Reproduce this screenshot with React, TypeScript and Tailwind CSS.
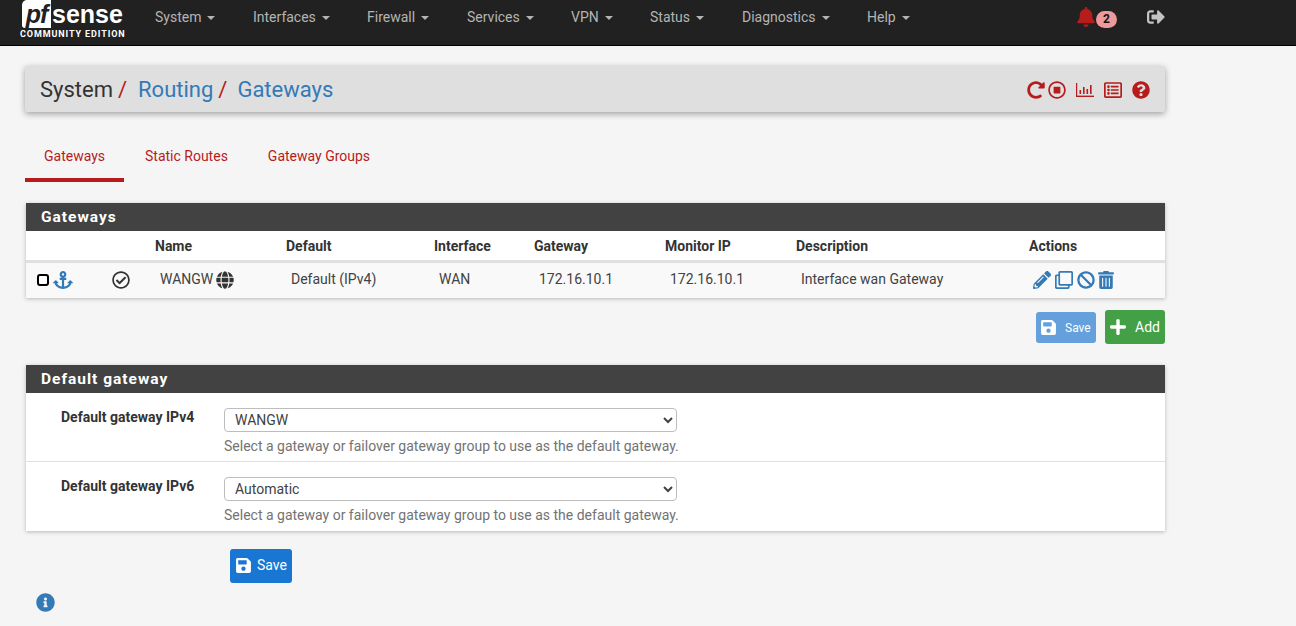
import React from 'react';
import {
  FaAnchor,
  FaBan,
  FaBell,
  FaGlobe,
  FaInfoCircle,
  FaPencilAlt,
  FaPlus,
  FaQuestionCircle,
  FaRedoAlt,
  FaRegCheckCircle,
  FaRegClone,
  FaRegListAlt,
  FaRegStopCircle,
  FaSave,
  FaSignOutAlt,
  FaTrashAlt,
} from 'react-icons/fa';

const navItems = [
  { label: 'System', width: 'w-[98px]' },
  { label: 'Interfaces', width: 'w-[114px]' },
  { label: 'Firewall', width: 'w-[100px]' },
  { label: 'Services', width: 'w-[104px]' },
  { label: 'VPN', width: 'w-[79px]' },
  { label: 'Status', width: 'w-[92px]' },
  { label: 'Diagnostics', width: 'w-[125px]' },
  { label: 'Help', width: 'w-[60px]' },
];

const Logo = () => (
  <div className="ml-[20px] w-[108px] h-[45px] flex flex-col shrink-0">
    <div className="flex items-start h-[29px]">
      <span className="ml-[2px] w-[29px] h-[28px] bg-white rounded-bl-[3px] rounded-tl-[5px] text-[#212121] italic font-bold text-[25px] leading-[28px] tracking-[-1px] text-center font-['Liberation_Sans',sans-serif]">
        pf
      </span>
      <span className="mt-[2px] text-white font-bold text-[25px] leading-[25px] ml-[1px] font-['Liberation_Sans',sans-serif]">sense</span>
    </div>
    <span className="mt-[1px] text-white font-bold text-[9px] leading-[9px] tracking-[0.9px] whitespace-nowrap">COMMUNITY EDITION</span>
  </div>
);

const Navbar = () => (
  <nav className="h-[46px] bg-[#212121] border-b border-black flex items-start shrink-0">
    <Logo />
    <ul className="flex ml-[27px] pt-[9px]">
      {navItems.map((item) => (
        <li key={item.label} className={`${item.width} flex items-center h-[17px] text-[14px] text-[#b4b4b4]`}>
          {item.label}
          <span className="ml-[6px] border-x-[4px] border-x-transparent border-t-[4px] border-t-[#b4b4b4]" />
        </li>
      ))}
    </ul>
    <div className="absolute left-[1077px] top-[7px] flex items-start">
      <FaBell className="text-[#b71c1c] w-[18px] h-[20px]" />
      <span className="ml-[1px] mt-[4px] w-[21px] h-[17px] rounded-full bg-[#ef9a9a] text-[#111] text-[12px] font-bold leading-[17px] text-center">2</span>
    </div>
    <FaSignOutAlt className="absolute left-[1147px] top-[8px] w-[18px] h-[18px] text-[#c4c4c4]" />
  </nav>
);

const BarChartIcon = () => (
  <svg viewBox="0 0 18 16" className="w-[18px] h-[16px] text-[#b71c1c]" fill="currentColor">
    <rect x="0" y="1" width="1.2" height="14" />
    <rect x="0" y="13.6" width="18" height="1.4" />
    <rect x="3.5" y="8" width="1.6" height="4" />
    <rect x="7" y="5" width="1.6" height="7" />
    <rect x="10.5" y="7" width="1.6" height="5" />
    <rect x="14" y="3" width="1.6" height="9" />
  </svg>
);

const Breadcrumb = () => (
  <div className="h-[46px] bg-[#dfdfdf] rounded-[2px] shadow-[0_2px_6px_rgba(0,0,0,0.35)] flex items-center pl-[15px] pr-[15px] text-[22px]">
    <span className="text-[#333]">System</span>
    <span className="text-[#b71c1c] ml-[5px]">/</span>
    <span className="text-[#337ab7] ml-[11px]">Routing</span>
    <span className="text-[#b71c1c] ml-[5px]">/</span>
    <span className="text-[#337ab7] ml-[10px]">Gateways</span>
    <div className="ml-auto flex items-center text-[#b71c1c] pt-[2px]">
      <FaRedoAlt className="w-[18px] h-[18px]" />
      <FaRegStopCircle className="ml-[3px] w-[18px] h-[18px]" />
      <span className="ml-[10px]"><BarChartIcon /></span>
      <FaRegListAlt className="ml-[10px] w-[18px] h-[18px]" />
      <FaQuestionCircle className="ml-[10px] w-[18px] h-[18px]" />
    </div>
  </div>
);

const Tabs = () => (
  <div className="flex mt-[20px] h-[50px] text-[14px] text-[#b71c1c]">
    <div className="w-[99px] border-b-[4px] border-[#b71c1c] pt-[14px] pl-[19px]">Gateways</div>
    <div className="ml-[21px] pt-[14px]">Static Routes</div>
    <div className="ml-[40px] pt-[14px]">Gateway Groups</div>
  </div>
);

const PanelHeading = ({ title }: { title: string }) => (
  <div className="h-[28px] bg-[#424242] text-white font-bold text-[15.5px] leading-[28px] pl-[15px] tracking-[1px]">{title}</div>
);

const headers = [
  { label: '', width: 'w-[69px]' },
  { label: '', width: 'w-[60px]' },
  { label: 'Name', width: 'w-[131px]' },
  { label: 'Default', width: 'w-[148px]' },
  { label: 'Interface', width: 'w-[100px]' },
  { label: 'Gateway', width: 'w-[131px]' },
  { label: 'Monitor IP', width: 'w-[131px]' },
  { label: 'Description', width: 'w-[233px]' },
  { label: 'Actions', width: '' },
];

const cells = ['Default (IPv4)', 'WAN', '172.16.10.1', '172.16.10.1', 'Interface wan Gateway'];

const GatewaysPanel = () => (
  <section className="mt-[21px] ml-[1px] shadow-[0_1px_4px_rgba(0,0,0,0.25)]">
    <PanelHeading title="Gateways" />
    <div className="flex h-[32px] pt-[1px] bg-white border-b-[3px] border-[#e0e0e0] text-[14px] font-bold text-[#333] items-center">
      {headers.map((h, i) => (
        <div key={i} className={h.width}>{h.label}</div>
      ))}
    </div>
    <div className="flex h-[35px] pb-[2px] bg-[#f9f9f9] items-center text-[14px] text-[#424242]">
      <div className="w-[129px] flex items-center shrink-0">
        <span className="ml-[11px] w-[12px] h-[12px] border-2 border-black rounded-[3px] bg-white" />
        <FaAnchor className="ml-[4px] w-[20px] h-[18px] text-[#337ab7]" />
        <FaRegCheckCircle className="ml-[39px] w-[18px] h-[18px] text-[#333]" />
      </div>
      <div className="w-[131px] pl-[5px] flex items-center">
        WANGW
        <FaGlobe className="ml-[3px] w-[18px] h-[18px] text-[#333]" />
      </div>
      <div className="w-[148px] pl-[5px]">{cells[0]}</div>
      <div className="w-[100px] pl-[5px]">{cells[1]}</div>
      <div className="w-[131px] pl-[5px]">{cells[2]}</div>
      <div className="w-[131px] pl-[5px]">{cells[3]}</div>
      <div className="w-[233px] pl-[5px]">{cells[4]}</div>
      <div className="flex items-center text-[#337ab7] pl-[4px]">
        <FaPencilAlt className="w-[18px] h-[18px]" />
        <FaRegClone className="ml-[4px] w-[18px] h-[18px]" />
        <FaBan className="ml-[4px] w-[18px] h-[18px]" />
        <FaTrashAlt className="ml-[3px] w-[16px] h-[18px]" />
      </div>
    </div>
  </section>
);

const FormRow = ({ label, value, options, height }: { label: string; value: string; options: string[]; height: string }) => (
  <div className={`flex ${height} bg-white pt-[15px]`}>
    <label className="w-[198px] pl-[35px] text-[14px] font-bold text-[#333] leading-[18px] shrink-0">{label}</label>
    <div className="w-[453px]">
      <select
        defaultValue={value}
        className="w-full h-[24px] pl-[6px] bg-white border border-[#bdbdbd] rounded-[4px] text-[14px] text-[#424242] appearance-auto"
      >
        {options.map((o) => (
          <option key={o}>{o}</option>
        ))}
      </select>
      <p className="mt-[5px] text-[14px] leading-[18px] text-[#737373] whitespace-nowrap">Select a gateway or failover gateway group to use as the default gateway.</p>
    </div>
  </div>
);

const DefaultGatewayPanel = () => (
  <section className="mt-[21px] ml-[1px] shadow-[0_1px_4px_rgba(0,0,0,0.25)]">
    <PanelHeading title="Default gateway" />
    <FormRow label="Default gateway IPv4" value="WANGW" options={['WANGW', 'Automatic', 'None']} height="h-[68px]" />
    <div className="h-px bg-[#e0e0e0]" />
    <FormRow label="Default gateway IPv6" value="Automatic" options={['Automatic', 'None']} height="h-[69px]" />
  </section>
);

export default function App() {
  return (
    <div className="relative h-[626px] overflow-hidden bg-[#f5f5f5] font-['Roboto',sans-serif] flex flex-col">
      <Navbar />
      <main className="w-[1140px] ml-[25px] mt-[20px]">
        <Breadcrumb />
        <Tabs />
        <GatewaysPanel />
        <div className="flex justify-end mt-[12px] h-[34px]">
          <button className="w-[60px] h-[31px] mt-[2px] bg-[#64a0dc] rounded-[3px] text-white text-[12px] flex items-center pl-[3px]">
            <FaSave className="ml-[1px] w-[17px] h-[17px]" />
            <span className="ml-[8px]">Save</span>
          </button>
          <button className="ml-[9px] w-[60px] h-[34px] bg-[#43a047] rounded-[3px] text-white text-[14px] flex items-center pl-[4px]">
            <FaPlus className="w-[18px] h-[18px]" />
            <span className="ml-[8px]">Add</span>
          </button>
        </div>
        <DefaultGatewayPanel />
        <button className="ml-[205px] mt-[18px] w-[62px] h-[34px] pb-[1px] bg-[#1976d2] rounded-[3px] text-white text-[14px] flex items-center pl-[5px]">
          <FaSave className="w-[17px] h-[17px]" />
          <span className="ml-[5px]">Save</span>
        </button>
        <FaInfoCircle className="ml-[11px] mt-[10px] w-[19px] h-[19px] text-[#337ab7]" />
      </main>
    </div>
  );
}
